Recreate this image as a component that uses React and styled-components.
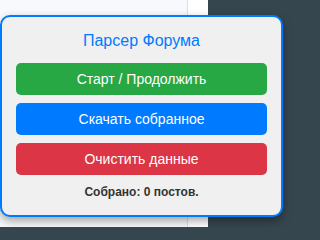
import React from "react";
import styled, { createGlobalStyle } from "styled-components";

const GlobalStyle = createGlobalStyle`
  html, body {
    margin: 0;
    padding: 0;
    background: #36464f;
  }
  body {
    font-family: "Liberation Sans", Arial, sans-serif;
  }
`;

const buttons = [
  { label: "Старт / Продолжить", color: "#28a745" },
  { label: "Скачать собранное", color: "#007bff" },
  { label: "Очистить данные", color: "#dc3545" },
];

const App = () => {
  return (
    <>
      <GlobalStyle />
      <Page>
        <Main>
          <Content />
        </Main>
        <Sidebar />
        <Popup>
          <Title>Парсер Форума</Title>
          <Actions>
            {buttons.map((b) => (
              <ActionButton key={b.label} color={b.color}>
                {b.label}
              </ActionButton>
            ))}
          </Actions>
          <Status>Собрано: 0 постов.</Status>
        </Popup>
      </Page>
    </>
  );
};

export default App;

// Styled components
const Page = styled.div`
  position: relative;
  display: flex;
  width: 100%;
  height: 227px;
  overflow: hidden;
`;

const Main = styled.div`
  width: 208px;
  flex-shrink: 0;
  background: #ffffff;
`;

const Content = styled.div`
  width: 187px;
  height: 100%;
  background: #f8f9fc;
  border-right: 1px solid #d3e0ee;
`;

const Sidebar = styled.div`
  flex: 1;
  background: #36464f;
`;

const Popup = styled.div`
  position: absolute;
  top: 15px;
  left: 0;
  box-sizing: border-box;
  width: 283px;
  height: 202px;
  padding: 14px;
  background: #f0f0f0;
  border: 2px solid #007bff;
  border-radius: 10px;
  box-shadow: 0 4px 10px rgba(0, 0, 0, 0.35);
  display: flex;
  flex-direction: column;
`;

const Title = styled.h3`
  margin: 0 0 12px;
  font-size: 16px;
  line-height: 20px;
  font-weight: normal;
  text-align: center;
  color: #007bff;
`;

const Actions = styled.div`
  display: flex;
  flex-direction: column;
  gap: 8px;
`;

const ActionButton = styled.button`
  height: 32px;
  border: none;
  border-radius: 5px;
  background: ${(props) => props.color};
  color: #ffffff;
  font-family: "Liberation Sans", Arial, sans-serif;
  font-size: 14px;
  cursor: pointer;
`;

const Status = styled.div`
  margin-top: 9px;
  font-size: 12px;
  line-height: 16px;
  font-weight: bold;
  text-align: center;
  color: #333333;
`;
